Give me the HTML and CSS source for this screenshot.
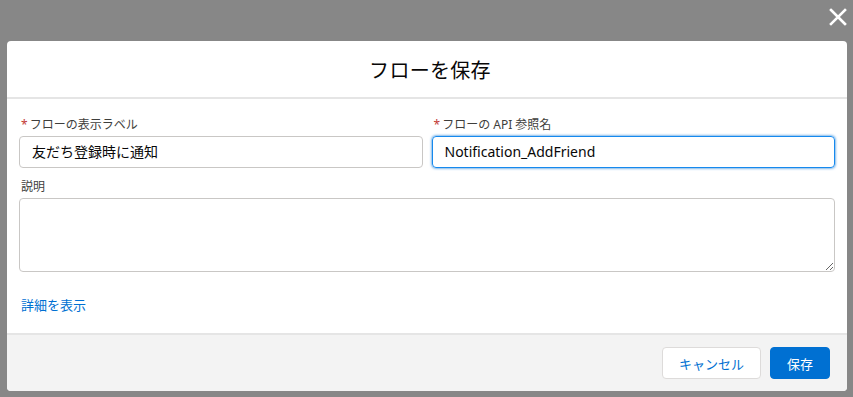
FILE: index.html
```html
<!DOCTYPE html>
<html lang="ja">
<head>
<meta charset="utf-8">
<link rel="stylesheet" href="styles.css">
</head>
<body>
<div class="backdrop">
  <button class="close" aria-label="閉じる">
    <svg width="18" height="18" viewBox="0 0 18 18"><path d="M2 2 L16 16 M16 2 L2 16" stroke="#fff" stroke-width="2.6" stroke-linecap="square"/></svg>
  </button>
  <div class="modal">
    <header class="modal-header"><h2 class="title">フローを保存</h2></header>
    <div class="modal-body">
      <div class="row">
        <div class="field">
          <label class="label"><span class="req">*</span>フローの表示ラベル</label>
          <div class="input">友だち登録時に通知</div>
        </div>
        <div class="field">
          <label class="label"><span class="req">*</span>フローの API 参照名</label>
          <div class="input focus">Notification_AddFriend</div>
        </div>
      </div>
      <div class="field full">
        <label class="label">説明</label>
        <textarea class="textarea"></textarea>
      </div>
      <a class="link">詳細を表示</a>
    </div>
    <footer class="modal-footer">
      <button class="btn neutral">キャンセル</button>
      <button class="btn brand">保存</button>
    </footer>
  </div>
</div>
</body>
</html>
```

FILE: styles.css
```css
* { box-sizing: border-box; }
html, body { margin: 0; padding: 0; }
body {
  background: #878787;
  font-family: "Noto Sans", "Noto Sans CJK JP", sans-serif;
  width: 853px;
  height: 397px;
  overflow: hidden;
}
.backdrop {
  position: relative;
  padding: 41px 6px 0 7px;
}
.close {
  position: absolute;
  top: 8px;
  left: 829px;
  background: none;
  border: 0;
  padding: 0;
  width: 18px;
  height: 18px;
}
.close svg { display: block; }
.modal {
  width: 840px;
  height: 350px;
  background: #fff;
  border-radius: 4px;
  display: flex;
  flex-direction: column;
  overflow: hidden;
}
.modal-header {
  height: 58px;
  border-bottom: 2px solid #e5e5e5;
  display: flex;
  align-items: center;
  justify-content: center;
}
.title {
  margin: 0;
  font-size: 20px;
  font-weight: 400;
  color: #080707;
  padding-left: 6px;
  letter-spacing: 0.3px;
}
.modal-body {
  padding: 17px 12px 0 12px;
  flex: 1;
}
.row {
  display: flex;
  gap: 9px;
}
.field { flex: 1; display: flex; flex-direction: column; }
.field.full { margin-top: 10px; }
.label {
  font-size: 12px;
  line-height: 18px;
  color: #3e3e3c;
  margin-bottom: 2px;
  padding-left: 2px;
}
.req { color: #c23934; margin-right: 2px; }
.input {
  height: 32px;
  border: 1px solid #c9c7c5;
  border-radius: 4px;
  padding: 0 12px;
  font-size: 14px;
  line-height: 30px;
  color: #080707;
}
.input.focus {
  border-color: #1589ee;
  box-shadow: 0 0 3px #0070d2;
}
.textarea {
  display: block;
  width: 100%;
  height: 74px;
  border: 1px solid #c9c7c5;
  border-radius: 4px;
  resize: vertical;
  font-family: inherit;
}
.link {
  display: block;
  margin-top: 24px;
  padding-left: 2px;
  font-size: 13px;
  line-height: 18px;
  color: #0070d2;
}
.modal-footer {
  height: 58px;
  border-top: 2px solid #e5e5e5;
  background: #f3f3f3;
  display: flex;
  justify-content: flex-end;
  align-items: flex-start;
  gap: 9px;
  padding: 12px 17px 0 0;
}
.btn {
  height: 32px;
  border-radius: 4px;
  font-family: inherit;
  font-size: 13px;
  padding: 0;
}
.neutral {
  width: 99px;
  background: #fff;
  border: 1px solid #dddbda;
  color: #0070d2;
}
.brand {
  width: 60px;
  background: #0070d2;
  border: 1px solid #0070d2;
  color: #fff;
}
```
